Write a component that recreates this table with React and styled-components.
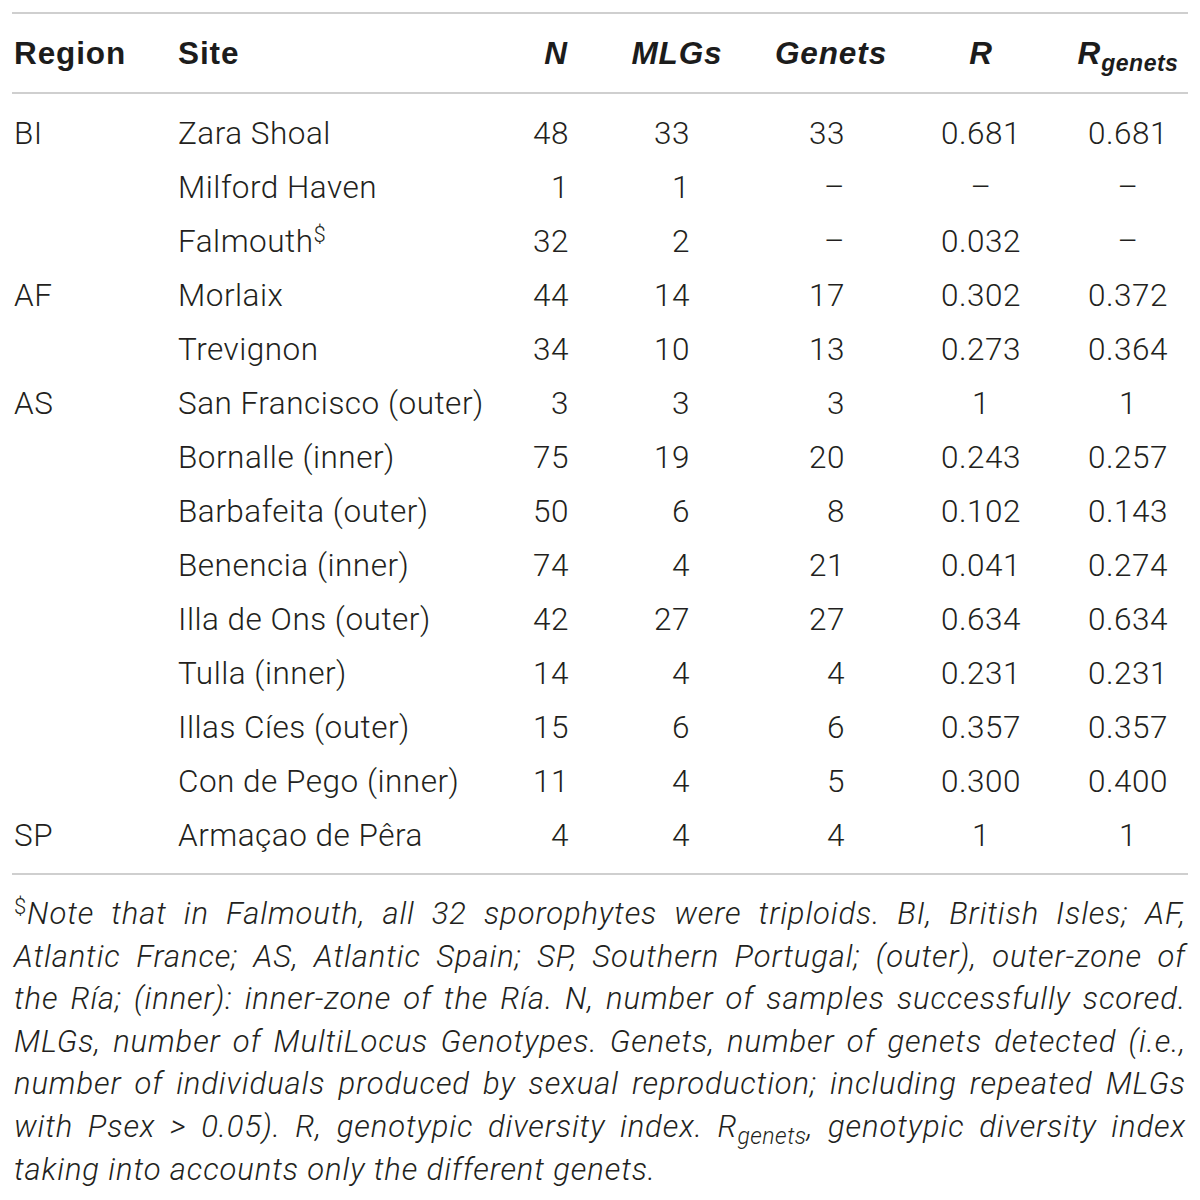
import React from 'react'
import styled, { createGlobalStyle } from 'styled-components'

const Global = createGlobalStyle`
  body {
    margin: 0;
    background: #fff;
    color: #231f20;
    font-family: Roboto, "Liberation Sans", sans-serif;
    font-weight: 300;
  }
`

const Page = styled.div`
  width: 1200px;
  padding: 12px 12px 0;
  box-sizing: border-box;
`

const Table = styled.div`
  border-top: 2px solid #cfcfcf;
  border-bottom: 2px solid #cfcfcf;
`

const Grid = styled.div`
  display: grid;
  grid-template-columns: 164px 312px 110px 154px 154px 160px 120px;
  padding-left: 2px;
`

const Head = styled(Grid)`
  height: 78px;
  align-items: center;
  border-bottom: 2px solid #cfcfcf;
  font-family: "Liberation Sans", Arial, sans-serif;
  font-weight: 700;
  font-size: 31.5px;
  letter-spacing: 0.9px;
  color: #1c1c1c;
`

const Body = styled.div`
  padding: 12px 0 11px;
`

const Row = styled(Grid)`
  height: 54px;
  align-items: center;
  font-size: 31.5px;
  letter-spacing: 0.5px;
`

const Cell = styled.div`
  text-align: ${(p) => p.$align || 'left'};
  padding-right: ${(p) => p.$pr || 0}px;
  font-style: ${(p) => (p.$italic ? 'italic' : 'normal')};
  white-space: nowrap;
`

const Sub = styled.sub`
  font-size: 23px;
  vertical-align: -7px;
  line-height: 0;
  letter-spacing: 0.5px;
`

const Sup = styled.sup`
  font-size: 22px;
  vertical-align: 10px;
  line-height: 0;
  font-style: normal;
`

const Note = styled.div`
  padding: 18px 2px 0;
  font-size: 31px;
  letter-spacing: 0.9px;
  font-style: italic;
  line-height: 42.6px;
`

const Line = styled.div`
  white-space: nowrap;
  text-align: left;
  text-align-last: ${(p) => (p.$last ? 'left' : 'justify')};
`

const cols = [
  { align: 'left' },
  { align: 'left' },
  { align: 'right', pr: 31 },
  { align: 'right', pr: 64 },
  { align: 'right', pr: 63 },
  { align: 'center', pr: 14 },
  { align: 'center' },
]

const rows = [
  ['BI', 'Zara Shoal', '48', '33', '33', '0.681', '0.681'],
  ['', 'Milford Haven', '1', '1', '–', '–', '–'],
  ['', 'Falmouth$', '32', '2', '–', '0.032', '–'],
  ['AF', 'Morlaix', '44', '14', '17', '0.302', '0.372'],
  ['', 'Trevignon', '34', '10', '13', '0.273', '0.364'],
  ['AS', 'San Francisco (outer)', '3', '3', '3', '1', '1'],
  ['', 'Bornalle (inner)', '75', '19', '20', '0.243', '0.257'],
  ['', 'Barbafeita (outer)', '50', '6', '8', '0.102', '0.143'],
  ['', 'Benencia (inner)', '74', '4', '21', '0.041', '0.274'],
  ['', 'Illa de Ons (outer)', '42', '27', '27', '0.634', '0.634'],
  ['', 'Tulla (inner)', '14', '4', '4', '0.231', '0.231'],
  ['', 'Illas Cíes (outer)', '15', '6', '6', '0.357', '0.357'],
  ['', 'Con de Pego (inner)', '11', '4', '5', '0.300', '0.400'],
  ['SP', 'Armaçao de Pêra', '4', '4', '4', '1', '1'],
]

const renderText = (t) =>
  t.endsWith('$') ? (
    <>
      {t.slice(0, -1)}
      <Sup>$</Sup>
    </>
  ) : (
    t
  )

export default function App() {
  return (
    <Page>
      <Global />
      <Table>
        <Head>
          <Cell>Region</Cell>
          <Cell>Site</Cell>
          <Cell $align="right" $pr={32} $italic>N</Cell>
          <Cell $align="center" $italic>MLGs</Cell>
          <Cell $align="center" $italic>Genets</Cell>
          <Cell $align="center" $pr={14} $italic>R</Cell>
          <Cell $align="center" $italic>
            R<Sub>genets</Sub>
          </Cell>
        </Head>
        <Body>
          {rows.map((r, i) => (
            <Row key={i}>
              {r.map((v, j) => (
                <Cell key={j} $align={cols[j].align} $pr={cols[j].pr}>
                  {renderText(v)}
                </Cell>
              ))}
            </Row>
          ))}
        </Body>
      </Table>
      <Note>
        <Line>
          <Sup>$</Sup>Note that in Falmouth, all 32 sporophytes were triploids. BI, British Isles; AF,
        </Line>
        <Line>Atlantic France; AS, Atlantic Spain; SP, Southern Portugal; (outer), outer-zone of</Line>
        <Line>the Ría; (inner): inner-zone of the Ría. N, number of samples successfully scored.</Line>
        <Line>MLGs, number of MultiLocus Genotypes. Genets, number of genets detected (i.e.,</Line>
        <Line>number of individuals produced by sexual reproduction; including repeated MLGs</Line>
        <Line>
          with Psex &gt; 0.05). R, genotypic diversity index. R<Sub>genets</Sub>, genotypic diversity index
        </Line>
        <Line $last>taking into accounts only the different genets.</Line>
      </Note>
    </Page>
  )
}
